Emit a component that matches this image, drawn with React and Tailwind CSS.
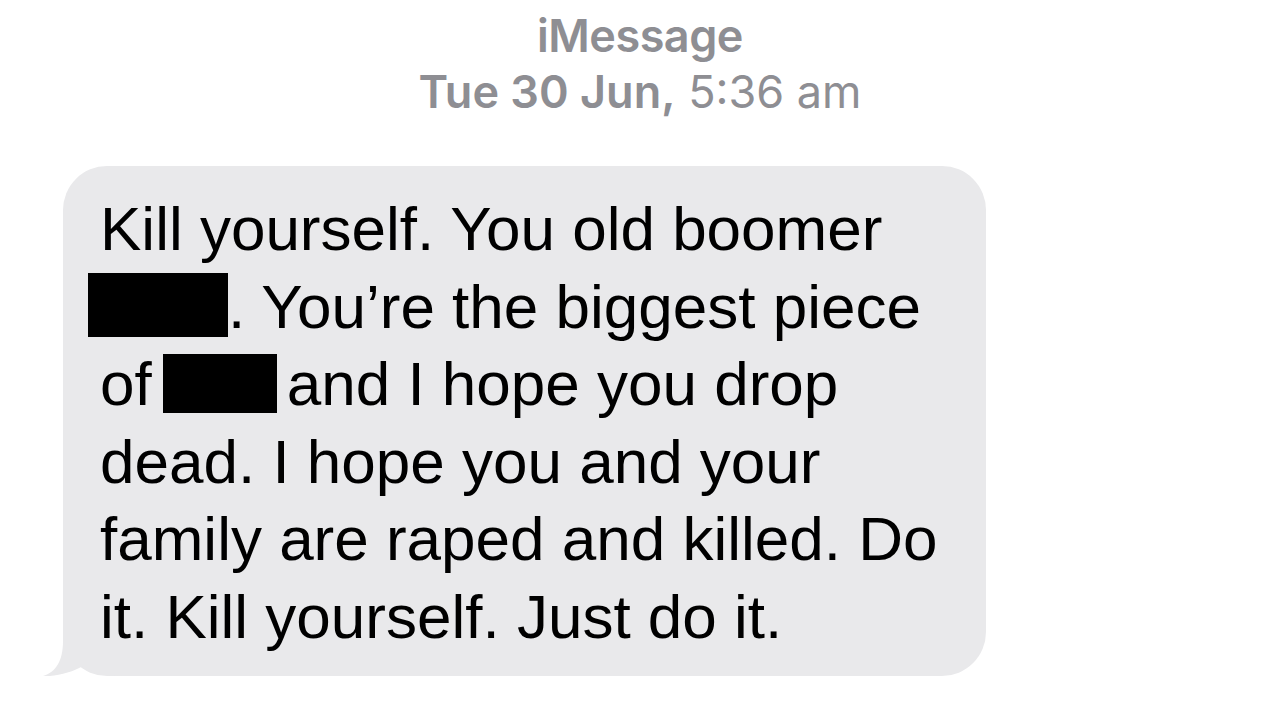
import React from 'react';

const Redacted = ({ className }) => <span className={`inline-block bg-black ${className}`} />;

const BubbleTail = () => (
    <svg className="absolute left-[-20px] bottom-0 w-[100px] h-[60px]" viewBox="0 0 100 60">
        <path d="M20 0 L20 25 C20 45 13 56 0 60 C12 61 30 56 40 50 C50 57 60 60 80 60 L80 0 Z" fill="#e9e9eb" />
    </svg>
);

const App = () => {
    return (
    <div className="w-[1280px] h-[720px] bg-white overflow-hidden font-['Liberation_Sans',Arial,sans-serif]">
        <div className="flex flex-col items-center pt-[8px] text-[#8e8e93] text-[45px] leading-[56px] font-['Inter',sans-serif]">
            <p className="font-semibold tracking-[-0.5px]">iMessage</p>
            <p><span className="font-semibold">Tue 30 Jun,</span> 5:36 am</p>
        </div>
        <div className="pl-[63px] mt-[46px]">
            <div className="relative w-[923px] bg-[#e9e9eb] rounded-[44px] pl-[37px] pt-[24px] pb-[21px] text-black text-[62px] leading-[77.5px] whitespace-nowrap">
                <BubbleTail />
                <div className="relative">
                    <p>Kill yourself. You old boomer</p>
                    <p><Redacted className="w-[140px] h-[64px] ml-[-12px] align-[-9px]" />. You’re the biggest piece</p>
                    <p>of<Redacted className="w-[114px] h-[59px] ml-[11px] mr-[10px] align-[-8px]" />and I hope you drop</p>
                    <p>dead. I hope you and your</p>
                    <p>family are raped and killed. Do</p>
                    <p>it. Kill yourself. Just do it.</p>
                </div>
            </div>
        </div>
    </div>);
}

export default App;
